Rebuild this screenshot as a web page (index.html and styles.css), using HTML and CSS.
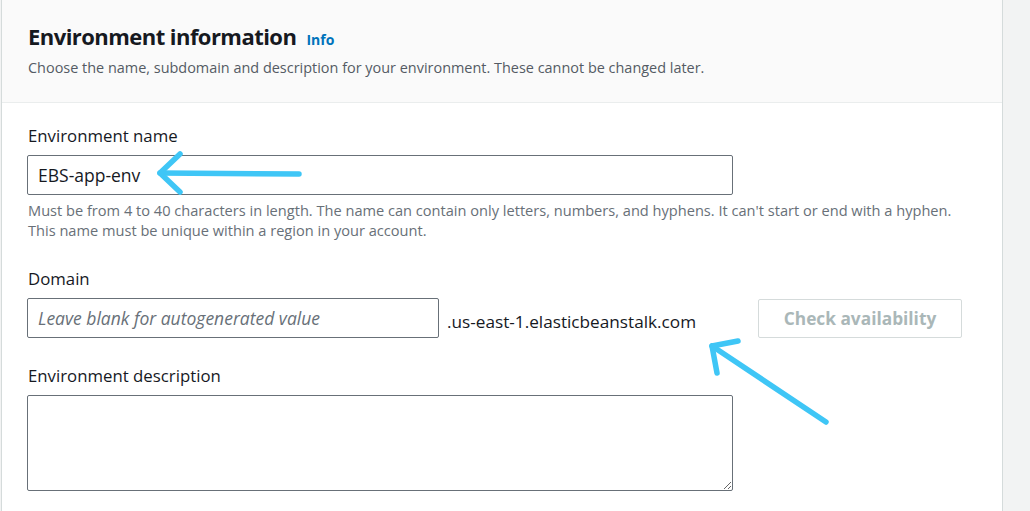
FILE: index.html
```html
<!DOCTYPE html>
<html lang="en">
<head>
<meta charset="utf-8">
<title>Environment information</title>
<link rel="stylesheet" href="styles.css">
</head>
<body>
<div class="page">
  <section class="card">
    <header class="card-header">
      <h2 class="title">Environment information <a class="info" href="#">Info</a></h2>
      <p class="desc">Choose the name, subdomain and description for your environment. These cannot be changed later.</p>
    </header>
    <div class="card-body">
      <div class="field field-name">
        <label class="label" for="envname">Environment name</label>
        <input id="envname" class="input input-wide" type="text" value="EBS-app-env">
        <p class="hint">Must be from 4 to 40 characters in length. The name can contain only letters, numbers, and hyphens. It can't start or end with a hyphen.<br>This name must be unique within a region in your account.</p>
      </div>
      <div class="field field-domain">
        <label class="label" for="domain">Domain</label>
        <div class="domain-row">
          <input id="domain" class="input input-domain" type="text" placeholder="Leave blank for autogenerated value">
          <span class="suffix">.us-east-1.elasticbeanstalk.com</span>
          <button class="btn" type="button" disabled>Check availability</button>
        </div>
      </div>
      <div class="field">
        <label class="label" for="desc">Environment description</label>
        <textarea id="desc" class="input input-wide textarea"></textarea>
      </div>
    </div>
  </section>
  <svg class="arrows" width="1030" height="511" viewBox="0 0 1030 511" aria-hidden="true">
    <g fill="none" stroke="#3fc6f6" stroke-width="5.5" stroke-linecap="round" stroke-linejoin="round">
      <path d="M299 174 L160 173"/>
      <path d="M180 154 L160 173 L180 192"/>
      <path d="M826 422 L712 346"/>
      <path d="M738 341 L712 346 L717 373"/>
    </g>
  </svg>
</div>
</body>
</html>
```
FILE: styles.css
```css
* { box-sizing: border-box; }
html, body { margin: 0; padding: 0; }
body {
  background: #f2f3f3;
  font-family: "Open Sans", "Noto Sans", Arial, sans-serif;
  color: #16191f;
}
.page {
  position: relative;
  width: 1030px;
  height: 511px;
  overflow: hidden;
  padding-left: 1px;
}
.card {
  width: 1002px;
  height: 520px;
  background: #ffffff;
  border-left: 1px solid #d5dbdb;
  border-right: 1px solid #d5dbdb;
}
.card-header {
  background: #fafafa;
  border-bottom: 1px solid #eaeded;
  padding: 21px 26px 0;
  height: 103px;
}
.title {
  margin: 0;
  font-size: 22px;
  line-height: 30px;
  font-weight: 700;
  color: #16191f;
  letter-spacing: -0.55px;
}
.info {
  font-size: 14px;
  font-weight: 700;
  color: #0073bb;
  text-decoration: none;
  margin-left: 5px;
  letter-spacing: 0;
}
.desc {
  margin: 3px 0 0;
  font-size: 14.45px;
  line-height: 20px;
  color: #545b64;
}
.card-body {
  padding: 22px 25px 0;
}
.field { margin-bottom: 27px; }
.field-name { margin-bottom: 28px; }
.label {
  display: block;
  font-size: 16.8px;
  line-height: 22px;
  color: #16191f;
  margin-bottom: 8px;
  padding-left: 1px;
}
.input {
  display: block;
  height: 40px;
  border: 1px solid #687078;
  border-radius: 2px;
  background: #fff;
  font-family: inherit;
  font-size: 17.5px;
  color: #16191f;
  padding: 0 10px;
  outline: none;
}
.input-wide { width: 706px; }
.input-domain { width: 412px; flex: none; }
.input::placeholder { color: #687078; font-style: italic; }
.hint {
  margin: 5px 0 0;
  padding-left: 1px;
  font-size: 14.6px;
  line-height: 20px;
  color: #687078;
}
.domain-row {
  display: flex;
  align-items: center;
  width: 935px;
}
.suffix {
  font-size: 17.2px;
  color: #16191f;
  margin-left: 8px;
  padding-top: 7px;
}
.btn {
  margin-left: auto;
  width: 204px;
  height: 39px;
  background: #fff;
  border: 1px solid #d5dbdb;
  border-radius: 2px;
  font-family: inherit;
  font-size: 17.3px;
  font-weight: 700;
  color: #aab7b8;
}
.textarea {
  height: 96px;
  resize: vertical;
  padding: 6px 10px;
}
.arrows {
  position: absolute;
  left: 0;
  top: 0;
  pointer-events: none;
}
```
